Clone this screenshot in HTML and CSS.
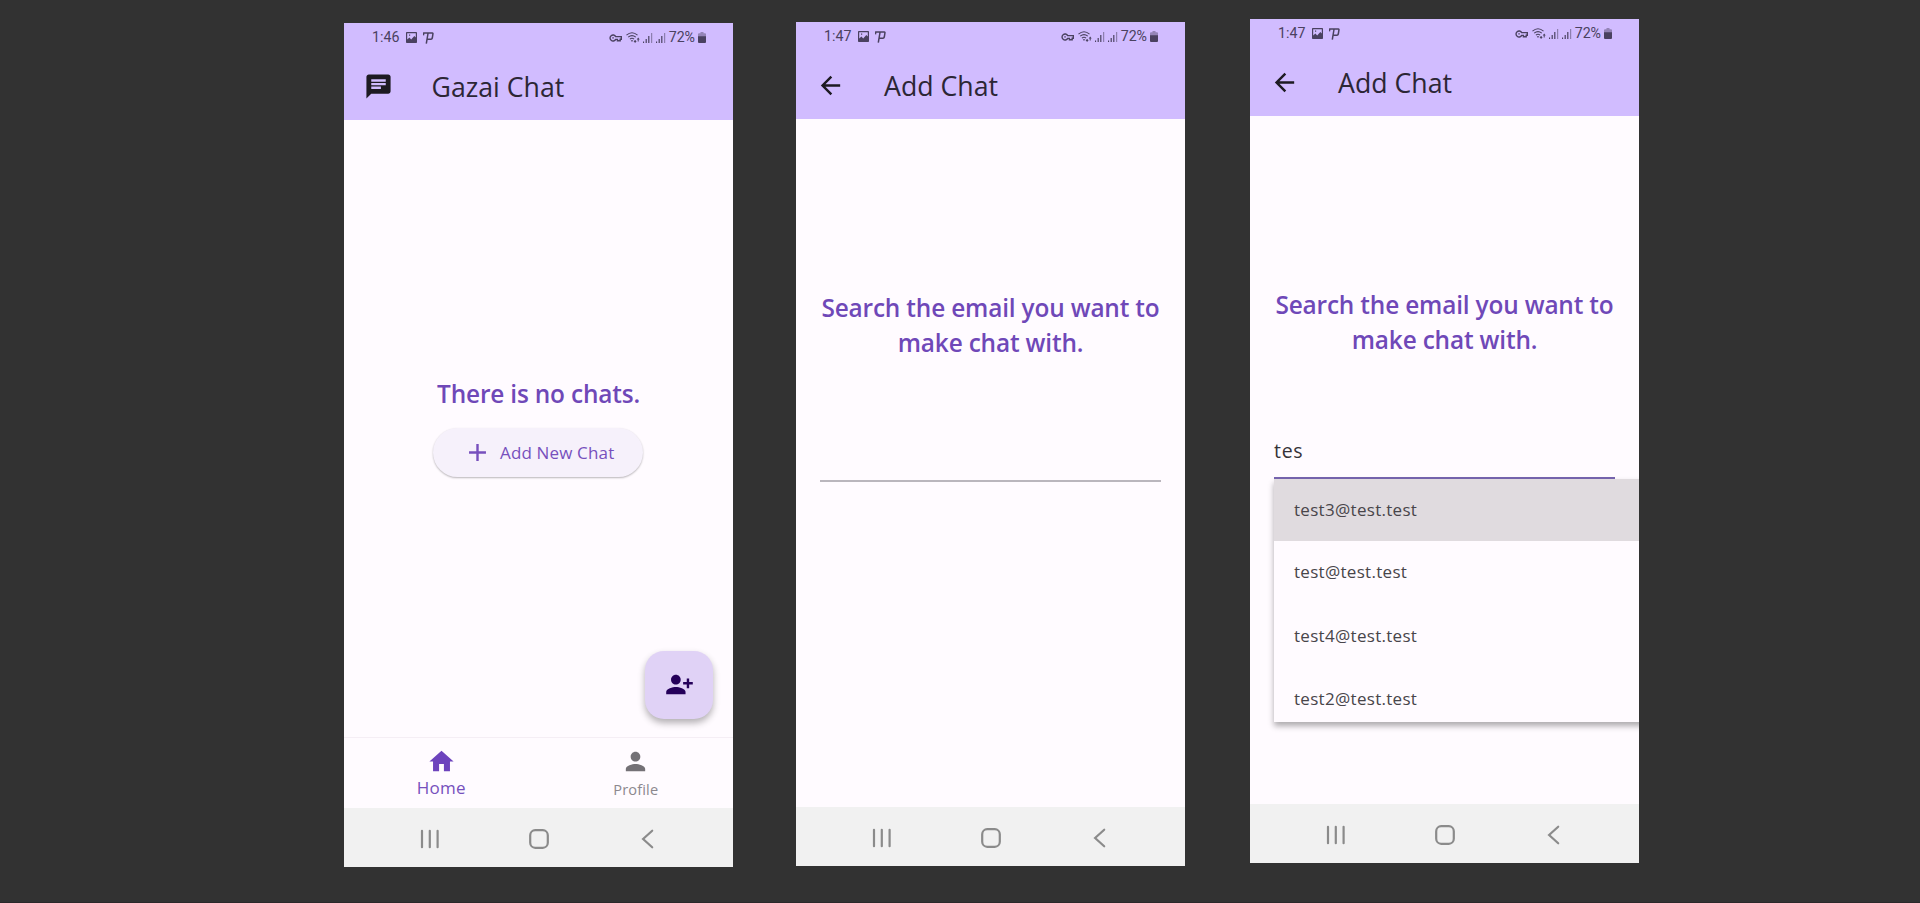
FILE: index.html
```html
<!DOCTYPE html>
<html lang="en">
<head>
<meta charset="utf-8">
<title>Gazai Chat</title>
<link rel="stylesheet" href="styles.css">
</head>
<body>
<svg class="defs" width="0" height="0">
  <symbol id="photo" viewBox="0 0 11 11"><path fill-rule="evenodd" d="M.8 0h9.4q.8 0 .8.8v9.4q0 .8-.8.8H.8q-.8 0-.8-.8V.8Q0 0 .8 0zM1.200 1.200v6.300L3.400 5.600 5.200 7.400 8.300 3.900l1.500 1.700V1.200zM3 2.600h1.200v1.200H3z"/></symbol>
  <symbol id="pmark" viewBox="0 0 11 12"><path fill="none" stroke="currentColor" stroke-width="1.500" d="M.4 3.400 .8 1H9.400Q10.100 1 9.900 2.200L9.300 6Q9 7.200 8 7.200H4.600M5 1.500 3.300 11.600"/></symbol>
  <symbol id="key" viewBox="0 0 13 8"><path fill="none" stroke="currentColor" stroke-width="1.400" d="M6.700 2.600A3 3 0 1 0 6.700 5.400H8.400V6.800H11.200V5.200H12.300V2.600ZM3.300 3.900h1.500"/></symbol>
  <symbol id="wifi" viewBox="0 0 14 11"><g fill="none" stroke="currentColor" stroke-width="1.100"><path d="M.5 3.200Q6 -1.600 11.500 3.200M2.200 5.200Q6 2 9.800 5.200M3.900 7.100Q6 5.400 8.100 7.100"/></g><path d="M4.800 8.200h2.400L6 9.900zM8.500 8h1.200v1h1L9.100 11 7.500 9h1zM11.700 9.500V7.400h-1l1.500-2 1.500 2h-1v2.100z"/></symbol>
  <symbol id="signal" viewBox="0 0 10 10"><path d="M0 8.500h1.100V10H0zM2.600 6h1.200v4H2.600zM5.200 3h1.200v7H5.200z"/><path opacity=".5" d="M8 0h1.200v10H8z"/></symbol>
  <symbol id="battery" viewBox="0 0 8 11"><path opacity=".45" d="M2.500 0h3v1.200H7q1 0 1 1V5H0V2.200q0-1 1-1h1.500z"/><path d="M0 4.200h8V10q0 1-1 1H1q-1 0-1-1z"/></symbol>
  <symbol id="chat" viewBox="0 0 24 24"><path d="M20 2H4c-1.100 0-1.990.9-1.990 2L2 22l4-4h14c1.100 0 2-.9 2-2V4c0-1.100-.9-2-2-2zM6 9h12v2H6V9zm8 5H6v-2h8v2zm4-6H6V6h12v2z"/></symbol>
  <symbol id="back" viewBox="0 0 24 24"><path d="M20 11H7.830l5.590-5.590L12 4l-8 8 8 8 1.410-1.410L7.830 13H20v-2z"/></symbol>
  <symbol id="add" viewBox="0 0 24 24"><path d="M19 13h-6v6h-2v-6H5v-2h6V5h2v6h6v2z"/></symbol>
  <symbol id="person-add" viewBox="0 0 24 24"><path d="M13 8c0-2.210-1.790-4-4-4S5 5.790 5 8s1.790 4 4 4 4-1.790 4-4zm2 2v2h3v3h2v-3h3v-2h-3V7h-2v3h-3zM1 18v2h16v-2c0-2.660-5.330-4-8-4s-8 1.340-8 4z"/></symbol>
  <symbol id="home" viewBox="0 0 24 24"><path d="M10 20v-6h4v6h5v-8h3L12 3 2 12h3v8z"/></symbol>
  <symbol id="person" viewBox="0 0 24 24"><path d="M12 12c2.210 0 4-1.790 4-4s-1.790-4-4-4-4 1.790-4 4 1.790 4 4 4zm0 2c-2.670 0-8 1.340-8 4v2h16v-2c0-2.660-5.330-4-8-4z"/></symbol>
  <symbol id="recents" viewBox="0 0 20 20"><path fill="none" stroke="currentColor" stroke-width="2.200" stroke-linecap="round" d="M2 1.800v16.400M9.800 1.800v16.400M17.600 1.800v16.400"/></symbol>
  <symbol id="square" viewBox="0 0 20 20"><rect x="1.200" y="1.200" width="17.600" height="17.600" rx="5" fill="none" stroke="currentColor" stroke-width="2.200"/></symbol>
  <symbol id="chevron" viewBox="0 0 20 20"><path fill="none" stroke="currentColor" stroke-width="2.200" stroke-linecap="round" d="M14.200 1.700 5.100 10l9.100 8.300"/></symbol>
</svg>

<main class="board">
  <section class="phone phone-home">
    <header class="appbar">
      <div class="status">
        <span>1:46</span><svg class="i-photo"><use href="#photo"/></svg><svg class="i-pmark"><use href="#pmark"/></svg>
        <div class="status-right"><svg class="i-key"><use href="#key"/></svg><svg class="i-wifi"><use href="#wifi"/></svg><svg class="i-signal"><use href="#signal"/></svg><svg class="i-signal"><use href="#signal"/></svg><span>72%</span><svg class="i-battery"><use href="#battery"/></svg></div>
      </div>
      <div class="toolbar"><svg class="icon"><use href="#chat"/></svg><h1 class="title title-home">Gazai Chat</h1></div>
    </header>
    <div class="content empty">
      <p class="heading">There is no chats.</p>
      <button class="new-chat"><svg class="icon"><use href="#add"/></svg><span>Add New Chat</span></button>
      <button class="fab"><svg class="icon"><use href="#person-add"/></svg></button>
    </div>
    <nav class="tabs">
      <a class="tab active"><svg class="icon"><use href="#home"/></svg><span>Home</span></a>
      <a class="tab"><svg class="icon"><use href="#person"/></svg><span>Profile</span></a>
    </nav>
    <div class="sysnav"><svg><use href="#recents"/></svg><svg><use href="#square"/></svg><svg><use href="#chevron"/></svg></div>
  </section>

  <section class="phone phone-add">
    <header class="appbar">
      <div class="status">
        <span>1:47</span><svg class="i-photo"><use href="#photo"/></svg><svg class="i-pmark"><use href="#pmark"/></svg>
        <div class="status-right"><svg class="i-key"><use href="#key"/></svg><svg class="i-wifi"><use href="#wifi"/></svg><svg class="i-signal"><use href="#signal"/></svg><svg class="i-signal"><use href="#signal"/></svg><span>72%</span><svg class="i-battery"><use href="#battery"/></svg></div>
      </div>
      <div class="toolbar"><svg class="icon"><use href="#back"/></svg><h1 class="title">Add Chat</h1></div>
    </header>
    <div class="content search">
      <p class="heading">Search the email you want to<br>make chat with.</p>
      <div class="field"></div>
    </div>
    <div class="sysnav"><svg><use href="#recents"/></svg><svg><use href="#square"/></svg><svg><use href="#chevron"/></svg></div>
  </section>

  <section class="phone phone-results">
    <header class="appbar">
      <div class="status">
        <span>1:47</span><svg class="i-photo"><use href="#photo"/></svg><svg class="i-pmark"><use href="#pmark"/></svg>
        <div class="status-right"><svg class="i-key"><use href="#key"/></svg><svg class="i-wifi"><use href="#wifi"/></svg><svg class="i-signal"><use href="#signal"/></svg><svg class="i-signal"><use href="#signal"/></svg><span>72%</span><svg class="i-battery"><use href="#battery"/></svg></div>
      </div>
      <div class="toolbar"><svg class="icon"><use href="#back"/></svg><h1 class="title">Add Chat</h1></div>
    </header>
    <div class="content search">
      <p class="heading">Search the email you want to<br>make chat with.</p>
      <div class="field focused">tes</div>
      <ul class="options">
        <li class="option highlighted">test3@test.test</li>
        <li class="option">test@test.test</li>
        <li class="option">test4@test.test</li>
        <li class="option">test2@test.test</li>
      </ul>
    </div>
    <div class="sysnav"><svg><use href="#recents"/></svg><svg><use href="#square"/></svg><svg><use href="#chevron"/></svg></div>
  </section>
</main>
</body>
</html>
```
FILE: styles.css
```css
* { box-sizing: border-box; }
body {
  margin: 0;
  background: #323232;
  font-family: "Open Sans", "Noto Sans", sans-serif;
}
.defs { position: absolute; }
svg { display: block; flex: none; fill: currentColor; }
.board {
  display: flex;
  align-items: flex-start;
  height: 903px;
  padding-left: 344px;
  border-bottom: 1px solid #2a282a;
  overflow: hidden;
}
.phone {
  display: flex;
  flex-direction: column;
  flex: none;
  width: 389px;
  height: 844px;
  background: #fffbff;
  overflow: hidden;
}
.phone-home { margin-top: 23px; }
.phone-add { margin: 22px 65px 0 63px; }
.phone-results { margin-top: 19px; }

.appbar { height: 97px; flex: none; background: #d1bcff; color: #1d1a22; }
.status {
  display: flex;
  align-items: center;
  height: 29px;
  padding: 0 27px 0 28px;
  font: 14.200px/29px Roboto, sans-serif;
  color: #4a4160;
}
.status-right { display: flex; align-items: center; margin-left: auto; }
.i-photo { width: 11px; height: 11px; margin-left: 7px; }
.i-pmark { width: 11px; height: 12px; margin-left: 6px; }
.i-key { width: 13px; height: 8px; }
.i-wifi { width: 14px; height: 11px; margin: 0 3px 0 4px; }
.i-signal { width: 10px; height: 10px; margin-right: 3px; }
.i-battery { width: 8px; height: 11px; margin-left: 3px; }

.icon { width: 29px; height: 29px; }
.toolbar { display: flex; align-items: center; height: 68px; padding-left: 19.500px; }
.title { margin: 2px 0 0 39.500px; font-size: 26.7px; line-height: 34px; font-weight: 400; color: #2c2635; }
.title-home { margin-left: 39px; }

.content { position: relative; flex: 1; min-height: 0; }
.heading {
  margin: 0;
  font-size: 24.4px;
  line-height: 35.2px;
  font-weight: 600;
  letter-spacing: -.17px;
  text-align: center;
  color: #6f48b8;
}
.empty { display: flex; flex-direction: column; align-items: center; padding-top: 256px; }
.new-chat {
  display: flex;
  align-items: center;
  gap: 8px;
  width: 210px;
  height: 49px;
  margin: 17px 1px 0 0;
  padding: 0 0 0 30px;
  border: 0;
  border-radius: 25px;
  background: #f6f1fb;
  box-shadow: 0 1px 2px rgba(0, 0, 0, .28);
  color: #7750bd;
  font: 17px/24px "Open Sans", sans-serif;
  letter-spacing: .15px;
}
.fab {
  position: absolute;
  right: 20px;
  bottom: 18.500px;
  display: flex;
  align-items: center;
  justify-content: center;
  width: 68px;
  height: 68px;
  padding: 0;
  border: 0;
  border-radius: 19px;
  background: #e0d2f6;
  box-shadow: 0 4px 7px rgba(0, 0, 0, .3);
  color: #25005a;
}
.tabs { display: flex; height: 71px; flex: none; border-top: 1px solid #f5eef5; }
.tab {
  display: flex;
  flex: 1;
  flex-direction: column;
  align-items: center;
  padding-top: 9px;
  font-size: 14.6px;
  line-height: 24px;
  letter-spacing: .15px;
  color: #8c888e;
}
.tab .icon { color: #747176; }
.tab span { padding-top: 1px; }
.tab.active { font-size: 17px; letter-spacing: .3px; color: #7650bd; }
.tab.active .icon { color: #6d43bd; }
.tab.active span { padding-top: 0; }

.sysnav {
  display: flex;
  align-items: center;
  gap: 89px;
  height: 59px;
  flex: none;
  padding: 2px 0 0 75.500px;
  background: #f1f1f1;
  color: #8b8b8b;
}
.sysnav svg { width: 20px; height: 20px; }

.search { padding: 171px 24px 0; }
.search .heading { margin: 0 -10px; }
.field {
  height: 122px;
  padding-top: 80px;
  border-bottom: 2px solid #bab6bd;
  font-size: 19.5px;
  line-height: 27px;
  letter-spacing: .7px;
  color: #353238;
}
.field.focused { border-bottom-color: #7765b0; }
.options {
  width: 389px;
  height: 243px;
  margin: 0;
  padding: 0;
  overflow: hidden;
  list-style: none;
  background: #fffbff;
  box-shadow: 0 4px 6px rgba(0, 0, 0, .32);
}
.option {
  height: 63.2px;
  padding: 0 20px;
  font-size: 17px;
  line-height: 62.600px;
  letter-spacing: .3px;
  color: #48454a;
}
.option.highlighted { height: 62px; line-height: 61px; background: #e0dbdf; }
```
